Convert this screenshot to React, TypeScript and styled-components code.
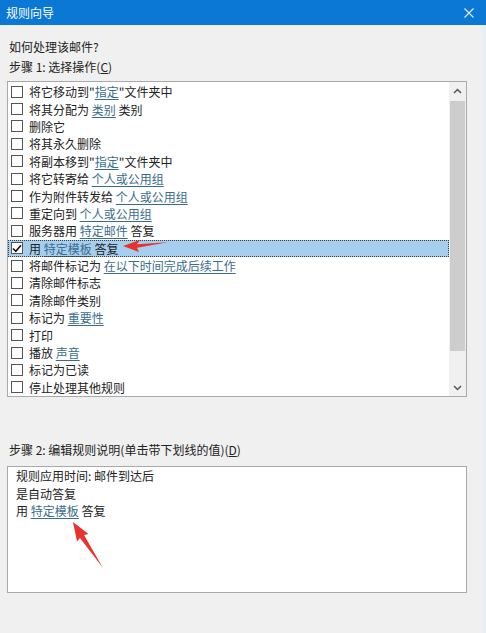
import React from "react";
import styled, { createGlobalStyle } from "styled-components";

const Global = createGlobalStyle`
  html, body { margin: 0; padding: 0; background: #f0f0f0; }
  body { font-family: "Noto Sans CJK SC", "Noto Sans", sans-serif; font-size: 12px; color: #222; }
`;

const Window = styled.div`
  position: relative;
  width: 486px;
  height: 633px;
  background: #f0f0f0;
  overflow: hidden;
  box-shadow: inset -4px 0 0 #e6f0f6;
  display: flex;
  flex-direction: column;
`;

const TitleBar = styled.div`
  height: 25px;
  background: #0a78d4;
  color: #fff;
  display: flex;
  align-items: center;
  justify-content: space-between;
  padding: 0 8px 0 6px;
  font-size: 12px;
  line-height: 25px;
`;

const CloseIcon = styled.svg`
  width: 10px;
  height: 10px;
  margin-right: 4px;
`;

const Body = styled.div`
  display: flex;
  flex-direction: column;
  padding: 0 19px 0 7px;
`;

const Label = styled.div<{ $top: number }>`
  margin-top: ${(p) => p.$top}px;
  line-height: 18px;
  height: 18px;
  padding-left: 2px;
  white-space: nowrap;
`;

const Key = styled.span`
  text-decoration: underline;
`;

const ListBox = styled.div`
  margin-top: 5px;
  height: 316px;
  box-sizing: border-box;
  border: 1px solid #a9a9a9;
  background: #fff;
  display: flex;
`;

const Rows = styled.div`
  flex: 1;
  padding-top: 1px;
  display: flex;
  flex-direction: column;
`;

const Row = styled.div<{ $selected?: boolean }>`
  height: 17.4px;
  box-sizing: border-box;
  display: flex;
  align-items: center;
  padding-left: 3px;
  white-space: nowrap;
  background: ${(p) => (p.$selected ? "#a6ceef" : "transparent")};
  outline: ${(p) => (p.$selected ? "1px dotted #3a3a3a" : "none")};
  outline-offset: -1px;
`;

const Check = styled.span`
  width: 12px;
  height: 12px;
  box-sizing: border-box;
  border: 1px solid #555;
  background: #fff;
  margin-right: 6px;
  flex: none;
  display: flex;
  align-items: center;
  justify-content: center;
`;

const Text = styled.span`
  line-height: 17px;
`;

const Link = styled.span`
  color: #3a6d8c;
  text-decoration: underline;
  text-underline-offset: 2px;
`;

const ScrollBar = styled.div`
  width: 17px;
  background: #f0f0f0;
  display: flex;
  flex-direction: column;
`;

const ScrollBtn = styled.div`
  height: 17px;
  display: flex;
  align-items: center;
  justify-content: center;
  flex: none;
`;

const Track = styled.div`
  flex: 1;
  padding: 2px 1px 28px 1px;
  display: flex;
`;

const Thumb = styled.div`
  flex: 1;
  background: #cdcdcd;
`;

const DescBox = styled.div`
  margin-top: 7px;
  height: 127px;
  box-sizing: border-box;
  border: 1px solid #a9a9a9;
  background: #fff;
  padding: 0 8px;
  display: flex;
  flex-direction: column;
`;

const DescLine = styled.div`
  line-height: 17.5px;
  height: 17.5px;
  white-space: nowrap;
`;

const Overlay = styled.svg`
  position: absolute;
  left: 0;
  top: 0;
  width: 486px;
  height: 633px;
  pointer-events: none;
`;

type Item = { parts: (string | { link: string })[]; checked?: boolean };

const items: Item[] = [
  { parts: ["将它移动到\"", { link: "指定" }, "\"文件夹中"] },
  { parts: ["将其分配为 ", { link: "类别" }, " 类别"] },
  { parts: ["删除它"] },
  { parts: ["将其永久删除"] },
  { parts: ["将副本移到\"", { link: "指定" }, "\"文件夹中"] },
  { parts: ["将它转寄给 ", { link: "个人或公用组" }] },
  { parts: ["作为附件转发给 ", { link: "个人或公用组" }] },
  { parts: ["重定向到 ", { link: "个人或公用组" }] },
  { parts: ["服务器用 ", { link: "特定邮件" }, " 答复"] },
  { parts: ["用 ", { link: "特定模板" }, " 答复"], checked: true },
  { parts: ["将邮件标记为 ", { link: "在以下时间完成后续工作" }] },
  { parts: ["清除邮件标志"] },
  { parts: ["清除邮件类别"] },
  { parts: ["标记为 ", { link: "重要性" }] },
  { parts: ["打印"] },
  { parts: ["播放 ", { link: "声音" }] },
  { parts: ["标记为已读"] },
  { parts: ["停止处理其他规则"] },
];

const Chevron = ({ up }: { up?: boolean }) => (
  <svg width="9" height="6" viewBox="0 0 9 6">
    <path
      d={up ? "M1 5 L4.5 1.5 L8 5" : "M1 1 L4.5 4.5 L8 1"}
      fill="none"
      stroke="#555"
      strokeWidth="1.5"
    />
  </svg>
);

export default function App() {
  return (
    <>
      <Global />
      <Window>
        <TitleBar>
          <span>规则向导</span>
          <CloseIcon viewBox="0 0 10 10">
            <path d="M0.5 0.5 L9.5 9.5 M9.5 0.5 L0.5 9.5" stroke="#dbeefa" strokeWidth="1.2" />
          </CloseIcon>
        </TitleBar>
        <Body>
          <Label $top={13}>如何处理该邮件?</Label>
          <Label $top={2}>
            步骤 1: 选择操作(<Key>C</Key>)
          </Label>
          <ListBox>
            <Rows>
              {items.map((it, i) => (
                <Row key={i} $selected={it.checked}>
                  <Check>
                    {it.checked && (
                      <svg width="10" height="9" viewBox="0 0 10 9">
                        <path d="M1 4.5 L3.8 7.3 L9 1.2" fill="none" stroke="#111" strokeWidth="1.6" />
                      </svg>
                    )}
                  </Check>
                  <Text>
                    {it.parts.map((p, j) =>
                      typeof p === "string" ? <span key={j}>{p}</span> : <Link key={j}>{p.link}</Link>
                    )}
                  </Text>
                </Row>
              ))}
            </Rows>
            <ScrollBar>
              <ScrollBtn>
                <Chevron up />
              </ScrollBtn>
              <Track>
                <Thumb />
              </Track>
              <ScrollBtn>
                <Chevron />
              </ScrollBtn>
            </ScrollBar>
          </ListBox>
          <Label $top={44}>
            步骤 2: 编辑规则说明(单击带下划线的值)(<Key>D</Key>)
          </Label>
          <DescBox>
            <DescLine>规则应用时间: 邮件到达后</DescLine>
            <DescLine>是自动答复</DescLine>
            <DescLine>
              用 <Link>特定模板</Link> 答复
            </DescLine>
          </DescBox>
        </Body>
        <Overlay viewBox="0 0 486 633">
          <polygon
            points="123,246 140,240 137,244.3 168,242.3 137,247.8 139,252"
            fill="#e8322e"
          />
          <polygon
            points="73,522 88.5,534 84,535 103,568 80,538 77,541.5"
            fill="#e8322e"
          />
        </Overlay>
      </Window>
    </>
  );
}
